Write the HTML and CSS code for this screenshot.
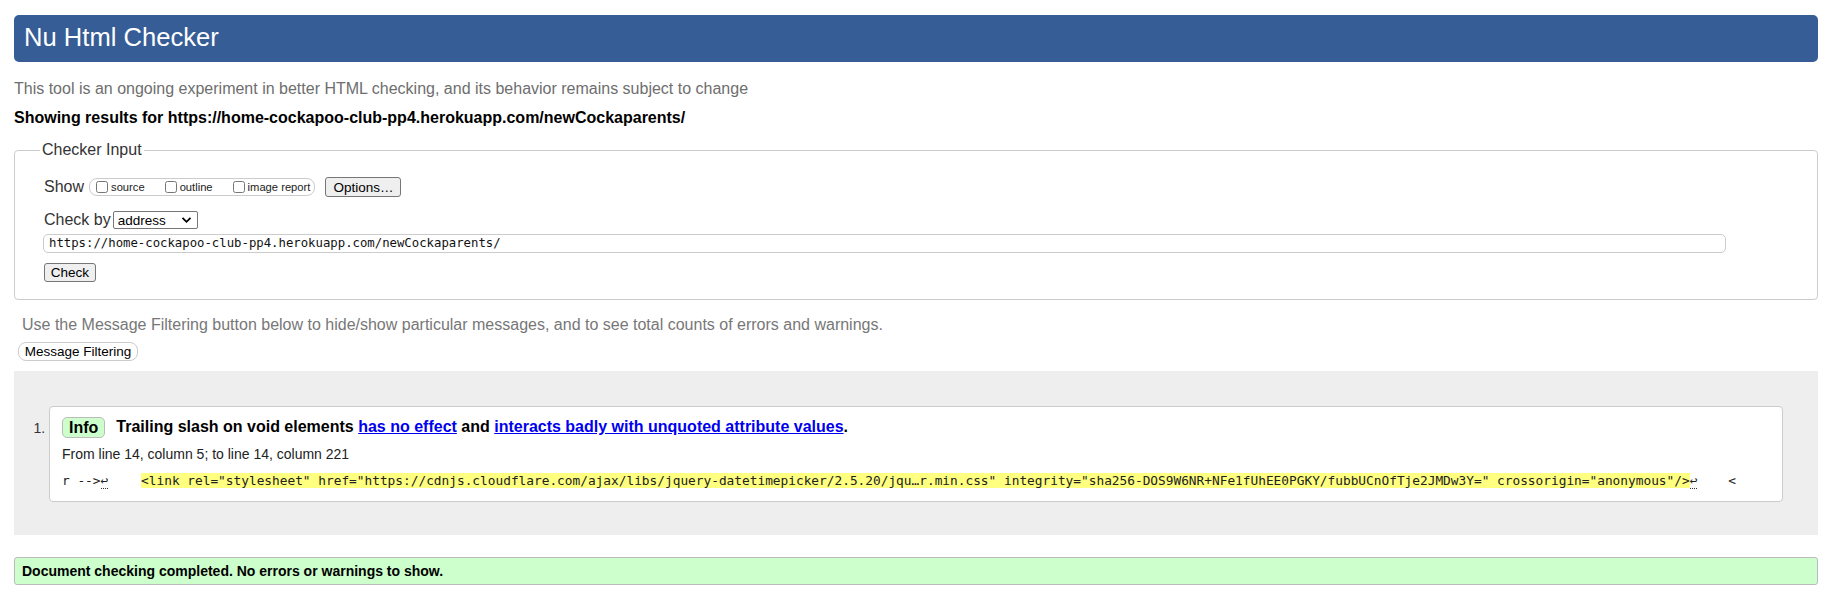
FILE: index.html
```html
<!DOCTYPE html>
<html lang="en">
<head>
<meta charset="utf-8">
<title>Showing results for https://home-cockapoo-club-pp4.herokuapp.com/newCockaparents/ - Nu Html Checker</title>
<link rel="stylesheet" href="styles.css">
</head>
<body>
<div class="page">
  <h1 class="title">Nu Html Checker</h1>
  <p class="intro">This tool is an ongoing experiment in better HTML checking, and its behavior remains subject to change</p>
  <p class="showing">Showing results for https://home-cockapoo-club-pp4.herokuapp.com/newCockaparents/</p>

  <fieldset class="checker">
    <legend class="checker-legend">Checker Input</legend>
    <div class="row row-show">
      <span class="row-label">Show</span>
      <span class="cb-group">
        <label class="cb"><input type="checkbox" class="cb-box"><span>source</span></label>
        <label class="cb"><input type="checkbox" class="cb-box"><span>outline</span></label>
        <label class="cb"><input type="checkbox" class="cb-box"><span>image report</span></label>
      </span>
      <button class="btn btn-options" type="button">Options…</button>
    </div>
    <div class="row row-by">
      <span class="row-label">Check by</span>
      <span class="select">address<svg class="chev" width="11" height="8" viewBox="0 0 11 8"><path d="M1.5 1.8 L5.5 5.8 L9.5 1.8" fill="none" stroke="#000" stroke-width="1.8"/></svg></span>
    </div>
    <div class="url">https://home-cockapoo-club-pp4.herokuapp.com/newCockaparents/</div>
    <div class="row-check"><button class="btn btn-check" type="button">Check</button></div>
  </fieldset>

  <p class="filter-note">Use the Message Filtering button below to hide/show particular messages, and to see total counts of errors and warnings.</p>
  <button class="btn-filter" type="button">Message Filtering</button>

  <ol class="results">
    <li class="msg">
      <p class="msg-title"><span class="badge">Info</span><span class="msg-text">Trailing slash on void elements <a href="#">has no effect</a> and <a href="#">interacts badly with unquoted attribute values</a>.</span></p>
      <p class="location">From line 14, column 5; to line 14, column 221</p>
      <p class="extract"><code>r --&gt;<span class="lf">↩</span>    <b class="hl">&lt;link rel="stylesheet" href="https://cdnjs.cloudflare.com/ajax/libs/jquery-datetimepicker/2.5.20/jqu…r.min.css" integrity="sha256-DOS9W6NR+NFe1fUhEE0PGKY/fubbUCnOfTje2JMDw3Y=" crossorigin="anonymous"/&gt;</b><span class="lf">↩</span>    &lt;</code></p>
    </li>
  </ol>

  <p class="success">Document checking completed. No errors or warnings to show.</p>
</div>
</body>
</html>
```

FILE: styles.css
```css
html, body {
  margin: 0;
  padding: 0;
  background: #fff;
}

body {
  font-family: "Liberation Sans", Arial, sans-serif;
  font-size: 16px;
  color: #000;
}

.page {
  padding: 15px 13px 8px 14px;
}

.title {
  margin: 0;
  height: 47px;
  line-height: 45px;
  padding: 0 10px;
  font-size: 25.6px;
  font-weight: normal;
  color: #fff;
  background: #365d95;
  border-radius: 5px;
}

.intro {
  margin: 17px 0 0 0;
  line-height: 20px;
  color: #6e6e6e;
}

.showing {
  margin: 9px 0 0 0;
  line-height: 20px;
  font-weight: bold;
}

.checker {
  margin: 13px 0 0 0;
  padding: 0 29px 17px 29px;
  border: 1px solid #ccc;
  border-radius: 4px;
}

.checker-legend {
  margin-left: -4px;
  padding: 0 2px;
  line-height: 18px;
  color: #333;
}

.row {
  display: flex;
  align-items: center;
  height: 20px;
}

.row-show {
  margin-top: 18px;
}

.row-label {
  color: #333;
  margin-right: 3px;
}

.cb-group {
  display: flex;
  align-items: center;
  height: 16px;
  padding: 0 4px 0 5px;
  border: 1px solid #ccc;
  border-radius: 8px;
  margin-left: 2px;
  gap: 19px;
}

.cb {
  display: flex;
  align-items: center;
  font-size: 11.2px;
  color: #222;
}

.cb-box {
  width: 12px;
  height: 12px;
  margin: 0 3px 0 1px;
}

.btn {
  font-family: "Liberation Sans", Arial, sans-serif;
  font-size: 13.5px;
  background: #efefef;
  border: 1px solid #767676;
  border-radius: 3px;
  color: #000;
  padding: 0 6px;
}

.btn-options {
  height: 20px;
  margin-left: 10px;
  width: 76px;
}

.row-by {
  margin-top: 13px;
}

.select {
  display: inline-flex;
  align-items: center;
  justify-content: space-between;
  box-sizing: border-box;
  width: 85px;
  height: 18px;
  padding: 0 5px 0 4px;
  border: 1px solid #767676;
  border-radius: 2px;
  font-size: 13.5px;
  margin-left: -1px;
}

.chev {
  display: block;
}

.url {
  box-sizing: border-box;
  margin: 4px 0 0 -1px;
  width: 1683px;
  height: 19px;
  line-height: 17px;
  padding: 0 5px;
  border: 1px solid #ccc;
  border-radius: 5px;
  font-family: "DejaVu Sans Mono", "Liberation Mono", monospace;
  font-size: 12.3px;
  color: #111;
}

.row-check {
  margin-top: 10px;
  height: 19px;
}

.btn-check {
  height: 19px;
  width: 52px;
  padding: 0;
}

.filter-note {
  margin: 15px 0 0 8px;
  line-height: 20px;
  color: #777;
}

.btn-filter {
  display: block;
  margin: 7px 0 0 4px;
  height: 19px;
  width: 120px;
  padding: 0;
  font-family: "Liberation Sans", Arial, sans-serif;
  font-size: 13.5px;
  background: #fff;
  color: #000;
  border: 1px solid #ccc;
  border-radius: 8px;
}

.results {
  margin: 10px 0 0 0;
  padding: 35px 35px 33px 35px;
  background: #eee;
  list-style: decimal outside;
}

.msg {
  background: #fff;
  border: 1px solid #ccc;
  border-radius: 4px;
  padding: 9px 13px 11px 12px;
  font-size: 14px;
  color: #333;
}

.msg::marker {
  color: #333;
  font-size: 14px;
}

.msg-title {
  margin: 0;
  display: flex;
  align-items: center;
  height: 22px;
  font-size: 16px;
  font-weight: bold;
  color: #000;
}

.badge {
  box-sizing: border-box;
  height: 21px;
  line-height: 19px;
  padding: 0 6px;
  background: #ccffcc;
  border: 1px solid #bbb;
  border-radius: 5px;
  margin-right: 11px;
}

.msg-text a {
  color: #0000ee;
}

.location {
  margin: 7px 0 0 0;
  line-height: 18px;
  color: #222;
}

.extract {
  margin: 8px 0 0 0;
  line-height: 18px;
}

.extract code {
  font-family: "DejaVu Sans Mono", "Liberation Mono", monospace;
  font-size: 12.8px;
  white-space: pre;
  color: #222;
}

.hl {
  font-weight: normal;
  background: #ffff80;
  margin-left: 2px;
}

.lf {
  border-bottom: 1px dotted #333;
}

.success {
  margin: 22px 0 0 0;
  box-sizing: border-box;
  height: 28px;
  line-height: 26px;
  padding: 0 7px;
  background: #ccffcc;
  border: 1px solid #bbb;
  border-radius: 3px;
  font-size: 14px;
  font-weight: bold;
}
```
